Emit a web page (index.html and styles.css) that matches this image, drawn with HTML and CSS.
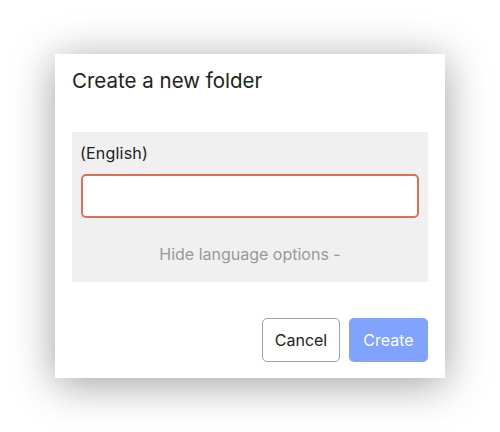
FILE: index.html
```html
<!DOCTYPE html>
<html lang="en">
<head>
<meta charset="utf-8">
<title>Create a new folder</title>
<link rel="stylesheet" href="styles.css">
</head>
<body>
<div class="dialog">
  <h1 class="title">Create a new folder</h1>
  <div class="lang-panel">
    <label class="lang-label" for="name-en">(English)</label>
    <input class="lang-input" id="name-en" type="text">
    <div class="lang-toggle">Hide language options -</div>
  </div>
  <div class="actions">
    <button class="btn btn-cancel">Cancel</button>
    <button class="btn btn-create">Create</button>
  </div>
</div>
</body>
</html>
```
FILE: styles.css
```css
* { box-sizing: border-box; }
html, body { margin: 0; padding: 0; }
body {
  background: #ffffff;
  height: 100vh;
  display: flex;
  align-items: center;
  justify-content: center;
  font-family: Inter, "Noto Sans", sans-serif;
}
.dialog {
  width: 390px;
  height: 324px;
  background: #ffffff;
  box-shadow: 0 6px 40px rgba(0, 0, 0, 0.38);
  padding: 15px 17px 16px;
  display: flex;
  flex-direction: column;
}
.title {
  margin: 0;
  font-size: 20.5px;
  line-height: 24px;
  font-weight: 400;
  color: #222222;
}
.lang-panel {
  margin-top: 39px;
  background: #f0f0f0;
  padding: 11px 9px 18px;
  display: flex;
  flex-direction: column;
}
.lang-label {
  font-size: 16px;
  line-height: 20px;
  color: #222222;
  margin-left: -1px;
  letter-spacing: 0.2px;
}
.lang-input {
  margin-top: 11px;
  height: 44px;
  width: 100%;
  border: 2px solid #dd705b;
  border-radius: 5px;
  background: #ffffff;
  outline: none;
}
.lang-toggle {
  margin-top: 26px;
  text-align: center;
  font-size: 16px;
  line-height: 20px;
  color: #999999;
}
.actions {
  margin-top: auto;
  display: flex;
  justify-content: flex-end;
  gap: 9px;
}
.btn {
  height: 44px;
  font-family: inherit;
  font-size: 16px;
  border-radius: 5px;
  cursor: pointer;
}
.btn-cancel {
  width: 78px;
  background: #ffffff;
  border: 1px solid #a3a3a3;
  color: #222222;
}
.btn-create {
  width: 79px;
  background: #80a3fd;
  border: none;
  color: #ffffff;
}
```
